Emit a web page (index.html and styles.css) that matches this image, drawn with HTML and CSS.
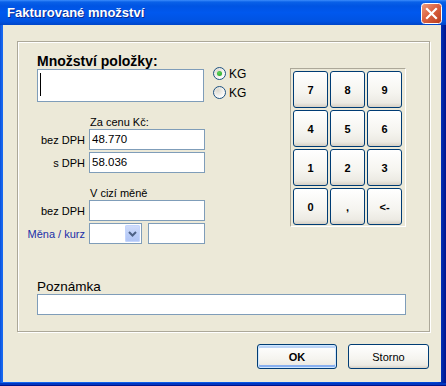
FILE: index.html
```html
<!DOCTYPE html>
<html lang="cs">

<head>
    <meta charset="UTF-8">
    <meta name="viewport" content="width=device-width, initial-scale=1.0">
    <title>Fakturované množství</title>
    <link rel="stylesheet" href="styles.css">
</head>

<body>
    <div class="window">
        <div class="titlebar">
            <span class="title">Fakturované množství</span>
            <span class="close">
                <svg width="21" height="21" viewBox="0 0 21 21">
                    <defs>
                        <linearGradient id="red" x1="0" y1="0" x2="1" y2="1">
                            <stop offset="0" stop-color="#EE9F80" />
                            <stop offset="0.45" stop-color="#DC6342" />
                            <stop offset="1" stop-color="#B73A1A" />
                        </linearGradient>
                    </defs>
                    <rect x="0.5" y="0.5" width="20" height="20" rx="3" fill="url(#red)" stroke="#fff" />
                    <path d="M6 6 L15 15 M15 6 L6 15" stroke="#fff" stroke-width="2.2" stroke-linecap="square" />
                </svg>
            </span>
        </div>
        <div class="frame">
            <div class="client">
                <div class="group">
                    <div class="main">
                        <div class="left">
                            <div class="qty-label">Množství položky:</div>
                            <div class="qty-row">
                                <div class="textbox qty"><span class="caret"></span></div>
                                <div class="radios">
                                    <div class="radio-row"><span class="radio checked"></span>KG</div>
                                    <div class="radio-row"><span class="radio"></span>KG</div>
                                </div>
                            </div>

                            <div class="section">
                                <div class="heading">Za cenu Kč:</div>
                                <div class="rows">
                                    <div class="label">bez DPH</div>
                                    <div class="textbox">48.770</div>
                                    <div class="label">s DPH</div>
                                    <div class="textbox">58.036</div>
                                </div>
                            </div>

                            <div class="section">
                                <div class="heading">V cizí měně</div>
                                <div class="rows">
                                    <div class="label">bez DPH</div>
                                    <div class="textbox"></div>
                                    <div class="label link">Měna / kurz</div>
                                    <div class="currency">
                                        <div class="combo">
                                            <span class="combo-btn">
                                                <svg width="15" height="17" viewBox="0 0 15 17">
                                                    <path d="M4 7 L7.5 10.5 L11 7" fill="none" stroke="#4D6185" stroke-width="2" />
                                                </svg>
                                            </span>
                                        </div>
                                        <div class="textbox rate"></div>
                                    </div>
                                </div>
                            </div>
                        </div>

                        <div class="keypad">
                            <button class="key">7</button>
                            <button class="key">8</button>
                            <button class="key">9</button>
                            <button class="key">4</button>
                            <button class="key">5</button>
                            <button class="key">6</button>
                            <button class="key">1</button>
                            <button class="key">2</button>
                            <button class="key">3</button>
                            <button class="key">0</button>
                            <button class="key">,</button>
                            <button class="key">&lt;-</button>
                        </div>
                    </div>

                    <div class="note">
                        <div class="note-label">Poznámka</div>
                        <div class="textbox note-box"></div>
                    </div>
                </div>

                <div class="actions">
                    <button class="btn default">OK</button>
                    <button class="btn">Storno</button>
                </div>
            </div>
        </div>
    </div>
</body>

</html>
```

FILE: styles.css
```css
body {
    margin: 0;
    background: #ECE9D8;
    font-family: "Liberation Sans", Arial, sans-serif;
    font-size: 11px;
    color: #000;
}

.window {
    width: 446px;
    height: 386px;
    display: flex;
    flex-direction: column;
}

.titlebar {
    height: 25px;
    flex: 0 0 25px;
    display: flex;
    align-items: center;
    justify-content: space-between;
    padding: 0 4px 0 7px;
    background: linear-gradient(#3C8CFB 0, #0A61E8 2px, #0054E3 6px, #0058EE 50%, #0053E2 85%, #0046C8 100%);
}

.title {
    color: #fff;
    font-weight: bold;
    font-size: 13px;
    text-shadow: 1px 1px 0 #0C2A8E;
}

.close {
    width: 21px;
    height: 21px;
    margin-top: 2px;
}

.frame {
    flex: 1;
    display: flex;
    padding: 0 5px 4px 3px;
    background: linear-gradient(to right, #0A4FD8, #1668F0 2px, #0858E6 50%, #0047D6 98%, #00138C);
    box-shadow: inset 0 -1px 0 #00138C, inset 0 -3px 0 #0036C0;
}

.client {
    flex: 1;
    background: #ECE9D8;
    display: flex;
    flex-direction: column;
}

/* group box */
.group {
    box-sizing: border-box;
    width: 413px;
    height: 291px;
    margin: 16px 0 0 14px;
    padding: 11px 0 0 19px;
    border: 1px solid #ACA899;
    box-shadow: inset 1px 1px 0 #fff, 1px 1px 0 #fff;
}

.main {
    display: flex;
    align-items: flex-start;
}

.left {
    flex: 0 0 253px;
}

.qty-label {
    font-size: 14px;
    font-weight: bold;
    line-height: 16px;
}

.qty-row {
    display: flex;
    align-items: flex-start;
}

.textbox {
    box-sizing: border-box;
    height: 21px;
    border: 1px solid #7F9DB9;
    background: #fff;
    padding-left: 2px;
    font-size: 11.5px;
    line-height: 19px;
}

.qty {
    width: 167px;
    height: 33px;
    position: relative;
}

.caret {
    position: absolute;
    left: 2px;
    top: 3px;
    width: 1px;
    height: 23px;
    background: #000;
}

.radios {
    display: flex;
    flex-direction: column;
    gap: 6px;
    margin: -2px 0 0 9px;
}

.radio-row {
    display: flex;
    align-items: center;
    gap: 3px;
    height: 13px;
    font-size: 12px;
}

.radio {
    box-sizing: border-box;
    width: 13px;
    height: 13px;
    border: 1px solid #1C5180;
    border-radius: 50%;
    background: radial-gradient(circle at 35% 30%, #DCD9CF, #fff 75%);
    display: flex;
    align-items: center;
    justify-content: center;
}

.radio.checked::after {
    content: "";
    width: 5px;
    height: 5px;
    border-radius: 50%;
    background: radial-gradient(circle at 40% 35%, #5DD35D, #21A121);
}

.section {
    margin: 13px 0 0 -15px;
}

.heading {
    padding-left: 68px;
    line-height: 14px;
}

.rows {
    display: grid;
    grid-template-columns: 63px 116px;
    column-gap: 4px;
    row-gap: 2px;
    align-items: center;
}

.label {
    text-align: right;
    white-space: nowrap;
}

.link {
    color: #1A2FA8;
}

.currency {
    display: flex;
    gap: 6px;
}

.combo {
    box-sizing: border-box;
    width: 53px;
    height: 21px;
    border: 1px solid #7F9DB9;
    background: #fff;
    display: flex;
    justify-content: flex-end;
    padding: 1px;
}

.combo-btn {
    width: 15px;
    height: 17px;
    border-radius: 2px;
    background: linear-gradient(#D2DEFB, #B9CCF7 60%, #AFC4F5);
    box-shadow: inset 0 0 0 1px #C4D5FC;
}

.combo-btn svg {
    display: block;
}

.rate {
    width: 57px;
}

/* keypad */
.keypad {
    margin-top: 15px;
    display: grid;
    grid-template-columns: repeat(3, 35px);
    grid-auto-rows: 37px;
    gap: 2px;
    padding: 2px 3px 1px 2px;
    border: 1px solid;
    border-color: #ACA899 #fff #fff #ACA899;
}

.key,
.btn {
    box-sizing: border-box;
    padding: 0;
    border: 1px solid #003C74;
    border-radius: 3px;
    background: linear-gradient(#FFFFFF, #F5F4EF 60%, #ECEAE3 88%, #D6D0C5);
    font-family: "Liberation Sans", Arial, sans-serif;
    font-size: 11px;
    color: #000;
}

.key {
    font-weight: bold;
}

.note {
    margin-top: 35px;
}

.note-label {
    font-size: 13.5px;
    line-height: 15px;
}

.note-box {
    width: 369px;
}

.actions {
    display: flex;
    justify-content: flex-end;
    gap: 11px;
    margin-top: 12px;
    padding-right: 12px;
}

.btn {
    width: 81px;
    height: 25px;
}

.btn.default {
    width: 80px;
    font-weight: bold;
    box-shadow: inset 0 0 0 1px #CEE7FF, inset 0 -2px 0 1px #88B0F0, inset 0 2px 0 1px #BCD4F6;
}
```
